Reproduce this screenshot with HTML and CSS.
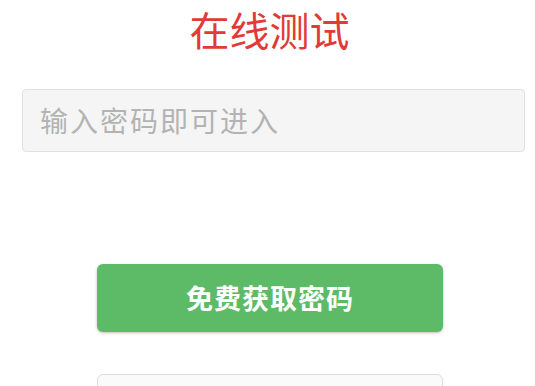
FILE: index.html
```html
<!DOCTYPE html>
<html lang="zh-CN">
<head>
<meta charset="utf-8">
<title>在线测试</title>
<link rel="stylesheet" href="styles.css">
</head>
<body>
<main class="page">
  <h1 class="title">在线测试</h1>
  <div class="field">
    <input class="pwd" type="password" placeholder="输入密码即可进入">
  </div>
  <div class="actions">
    <button class="btn btn-primary" type="button">免费获取密码</button>
    <button class="btn btn-default" type="button"></button>
  </div>
</main>
</body>
</html>
```
FILE: styles.css
```css
html, body {
  margin: 0;
  padding: 0;
  background: #ffffff;
}
body {
  font-family: "Noto Sans CJK SC", "Noto Sans", sans-serif;
  overflow: hidden;
}
.page {
  display: flex;
  flex-direction: column;
  padding: 0 10px 0 22px;
}
.title {
  margin: 0;
  padding: 0 8px 2px 0;
  line-height: 58px;
  font-size: 40px;
  font-weight: 400;
  color: #e23b35;
  text-align: center;
}
.field {
  margin-top: 29px;
}
.pwd {
  box-sizing: border-box;
  display: block;
  width: 100%;
  height: 63px;
  margin: 0;
  padding: 0 17px 2px;
  border: 1px solid #e1e1e1;
  border-radius: 4px;
  background: #f5f5f5;
  font-family: inherit;
  font-size: 28px;
  letter-spacing: 2px;
  color: #555;
  outline: none;
}
.pwd::placeholder {
  color: #b3b3b3;
}
.actions {
  display: flex;
  flex-direction: column;
  gap: 42px;
  margin-top: 112px;
  padding-left: 75px;
}
.btn {
  box-sizing: border-box;
  width: 346px;
  height: 68px;
  margin: 0;
  border-radius: 6px;
  font-family: inherit;
  font-size: 27px;
  font-weight: 700;
  cursor: pointer;
}
.btn-primary {
  border: none;
  background: #5dba66;
  color: #ffffff;
  box-shadow: 0 1px 3px rgba(0, 0, 0, 0.25);
  letter-spacing: 1px;
  padding: 0 0 2px;
}
.btn-default {
  border: 1px solid #dcdcdc;
  background: #fafafa;
  color: #333;
}
```
